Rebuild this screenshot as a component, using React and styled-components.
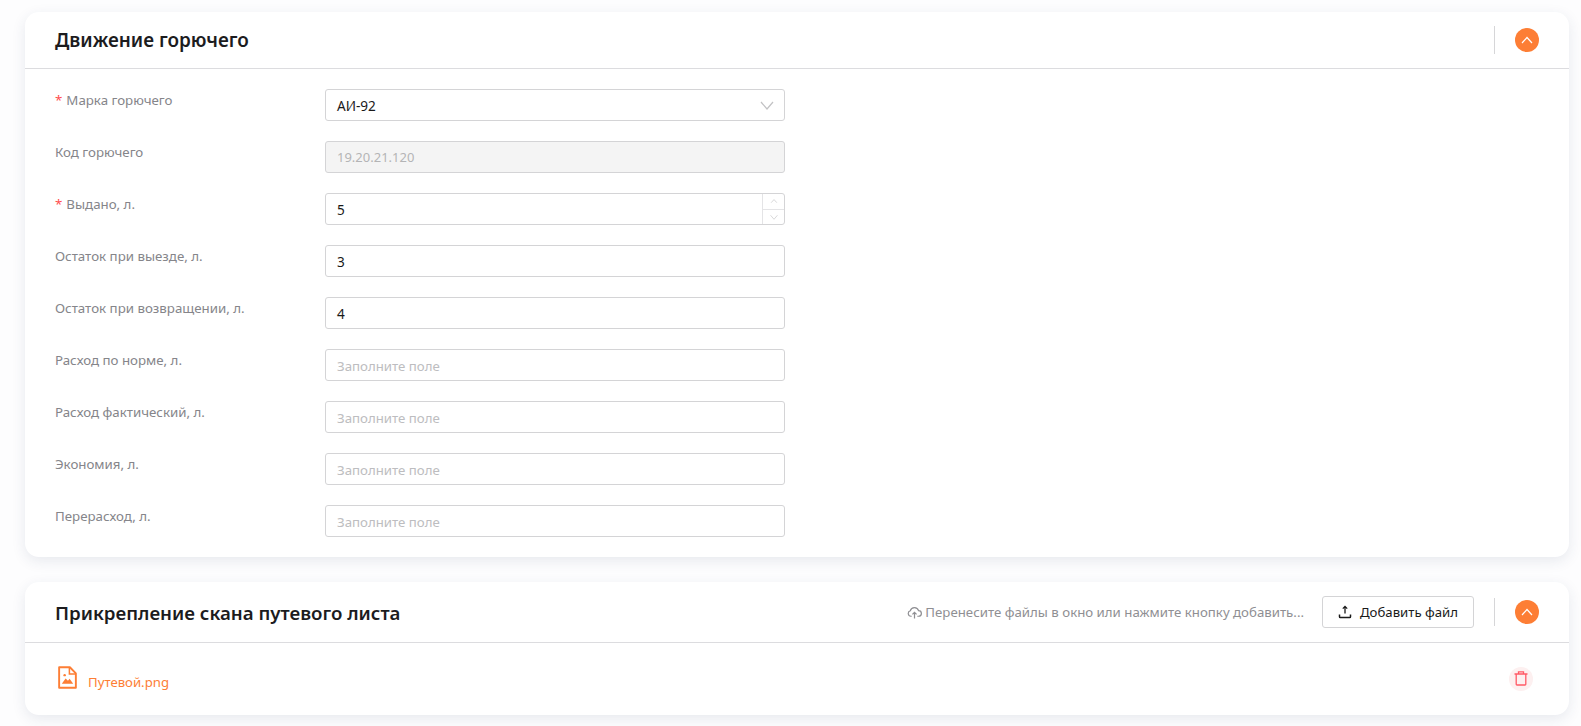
import React from 'react';
import styled, { createGlobalStyle } from 'styled-components';

const GlobalStyle = createGlobalStyle`
  html, body {
    margin: 0;
    padding: 0;
    background: #fdfdfe;
    font-family: "Noto Sans", "Open Sans", sans-serif;
    overflow: hidden;
  }
`;

const Page = styled.div`
  display: flex;
  flex-direction: column;
  gap: 25px;
  padding: 12px 12px 0 25px;
  height: 726px;
  box-sizing: border-box;
`;

const Card = styled.section`
  background: #fff;
  border-radius: 14px;
  box-shadow: 0 4px 14px rgba(40, 60, 100, 0.1);
`;

const CardHeader = styled.header`
  display: flex;
  align-items: center;
  height: ${p => p.$height}px;
  padding: 0 30px;
  border-bottom: 1.5px solid #dcdcdf;
  box-sizing: border-box;
`;

const CardTitle = styled.h2`
  flex: 1;
  margin: 0;
  padding-top: ${p => (p.$lower ? '2px' : '0')};
  font-size: ${p => (p.$lower ? '18.7px' : '18.9px')};
  line-height: 24px;
  font-weight: 600;
  color: #1c1c1e;
`;

const Divider = styled.span`
  width: 1px;
  height: 28px;
  margin: 0 20px;
  background: #d6d6d8;
`;

const CollapseButton = styled.button`
  display: flex;
  align-items: center;
  justify-content: center;
  width: 24px;
  height: 24px;
  padding: 0;
  border: 0;
  border-radius: 50%;
  background: #fd7e35;
  color: #fff;
`;

const FormBody = styled.div`
  display: flex;
  flex-direction: column;
  gap: 20px;
  padding: 20px 30px 20px;
`;

const Row = styled.div`
  display: flex;
  height: 32px;
`;

const Label = styled.label`
  width: 270px;
  font-size: 13.3px;
  line-height: 22px;
  color: #85858a;
`;

const Star = styled.span`
  color: #ff4d4f;
  margin-right: 4px;
`;

const Field = styled.div`
  position: relative;
  display: flex;
  align-items: center;
  width: 460px;
  height: 32px;
  box-sizing: border-box;
  padding: ${p => (p.$placeholder ? '2px' : '0')} 11px 0;
  border: 1px solid #d4d4d6;
  border-radius: 3px;
  font-size: ${p => (p.$placeholder ? '13.25px' : p.$disabled ? '13px' : '13.6px')};
  color: ${p => (p.$placeholder ? '#bdbdc0' : p.$disabled ? '#b4b4b6' : '#1a1a1a')};
  background: ${p => (p.$disabled ? '#f4f4f4' : '#fff')};
`;

const SelectArrow = styled.span`
  position: absolute;
  right: 10px;
  top: 8px;
  color: #c2c2c4;
  display: flex;
`;

const Stepper = styled.div`
  position: absolute;
  top: 0;
  right: 0;
  bottom: 0;
  width: 21px;
  display: flex;
  flex-direction: column;
  border-left: 1px solid #e4e4e6;
`;

const StepButton = styled.span`
  flex: 1;
  display: flex;
  align-items: center;
  justify-content: center;
  color: #c6c6c8;
  & + & {
    border-top: 1px solid #e4e4e6;
  }
`;

const DropHint = styled.span`
  display: flex;
  align-items: center;
  gap: 3px;
  font-size: 13.25px;
  color: #8f8f93;
  margin-right: 18px;
`;

const AddButton = styled.button`
  display: flex;
  align-items: center;
  justify-content: center;
  gap: 8px;
  width: 152px;
  height: 32px;
  padding: 0;
  border: 1px solid #d4d4d6;
  border-radius: 3px;
  background: #fff;
  font: inherit;
  font-size: 13.2px;
  color: #1a1a1a;
`;

const FileRow = styled.div`
  display: flex;
  align-items: center;
  justify-content: space-between;
  padding: 23px 36px 24px 33px;
`;

const FileLink = styled.a`
  display: flex;
  align-items: flex-end;
  gap: 11px;
  font-size: 13.2px;
  line-height: 18px;
  color: #fd7e35;
`;

const FileSvg = styled.svg`
  margin-bottom: 2px;
`;

const DeleteButton = styled.button`
  display: flex;
  align-items: center;
  justify-content: center;
  width: 24px;
  height: 24px;
  padding: 0;
  border: 0;
  border-radius: 50%;
  background: #fdf0f0;
  color: #ff5a66;
`;

const Chevron = ({ up, size = 14, width = 1.2 }) => (
  <svg width={size} height={size} viewBox="0 0 14 14" fill="none" stroke="currentColor" strokeWidth={width}>
    <path d={up ? 'M2 10l5-5.5 5 5.5' : 'M1 4l6 7 6-7'} />
  </svg>
);

const CloudIcon = () => (
  <svg width="15" height="15" viewBox="0 0 16 16" fill="none" stroke="currentColor" strokeWidth="1.3">
    <path d="M5 12H4.2A3 3 0 0 1 3.6 6.1 4.5 4.5 0 0 1 12.3 6a3 3 0 0 1 .1 6H11" />
    <path d="M8 14.5V8M5.8 10L8 7.8 10.2 10" />
  </svg>
);

const UploadIcon = () => (
  <svg width="14" height="14" viewBox="0 0 14 14" fill="none" stroke="currentColor" strokeWidth="1.3">
    <path d="M7 8.5V1.5M4.8 3.6L7 1.4l2.2 2.2" />
    <path d="M1.5 9.5v2.2a.8.8 0 0 0 .8.8h9.4a.8.8 0 0 0 .8-.8V9.5" strokeWidth="1.5" />
  </svg>
);

const FileImageIcon = () => (
  <FileSvg width="19" height="23" viewBox="0 0 20 24" fill="none" stroke="#fd7e35" strokeWidth="2">
    <path d="M1.2 1.2h11.3l6.3 6.5v15.1H1.2z" strokeLinejoin="round" />
    <path d="M12 1.2v7h6.8" strokeWidth="1.6" />
    <circle cx="7" cy="9.5" r="1.3" fill="#fd7e35" stroke="none" />
    <path d="M4 18.5l4-5.5 2.5 2.5 1.7-2.2 3.8 5.2z" fill="#fd7e35" stroke="none" />
  </FileSvg>
);

const TrashIcon = () => (
  <svg width="14" height="15" viewBox="0 0 14 15" fill="none" stroke="currentColor" strokeWidth="1.3">
    <path d="M.5 3h13M4.5 3V.8h5V3M2.2 3v10.2a.8.8 0 0 0 .8.8h8a.8.8 0 0 0 .8-.8V3" />
  </svg>
);

const fields = [
  { label: 'Марка горючего', required: true, value: 'АИ-92', kind: 'select' },
  { label: 'Код горючего', value: '19.20.21.120', kind: 'disabled' },
  { label: 'Выдано, л.', required: true, value: '5', kind: 'number' },
  { label: 'Остаток при выезде, л.', value: '3' },
  { label: 'Остаток при возвращении, л.', value: '4' },
  { label: 'Расход по норме, л.' },
  { label: 'Расход фактический, л.' },
  { label: 'Экономия, л.' },
  { label: 'Перерасход, л.' },
];

export default function App() {
  return (
    <>
      <GlobalStyle />
      <Page>
        <Card>
          <CardHeader $height={57}>
            <CardTitle>Движение горючего</CardTitle>
            <Divider />
            <CollapseButton aria-label="Свернуть">
              <Chevron up />
            </CollapseButton>
          </CardHeader>
          <FormBody>
            {fields.map(f => (
              <Row key={f.label}>
                <Label>
                  {f.required && <Star>*</Star>}
                  {f.label}
                </Label>
                <Field $placeholder={!f.value} $disabled={f.kind === 'disabled'}>
                  {f.value || 'Заполните поле'}
                  {f.kind === 'select' && (
                    <SelectArrow>
                      <Chevron />
                    </SelectArrow>
                  )}
                  {f.kind === 'number' && (
                    <Stepper>
                      <StepButton>
                        <Chevron up size={8} width={1.2} />
                      </StepButton>
                      <StepButton>
                        <Chevron size={8} width={1.2} />
                      </StepButton>
                    </Stepper>
                  )}
                </Field>
              </Row>
            ))}
          </FormBody>
        </Card>
        <Card>
          <CardHeader $height={61}>
            <CardTitle $lower>Прикрепление скана путевого листа</CardTitle>
            <DropHint>
              <CloudIcon />
              Перенесите файлы в окно или нажмите кнопку добавить...
            </DropHint>
            <AddButton>
              <UploadIcon />
              Добавить файл
            </AddButton>
            <Divider />
            <CollapseButton aria-label="Свернуть">
              <Chevron up />
            </CollapseButton>
          </CardHeader>
          <FileRow>
            <FileLink>
              <FileImageIcon />
              Путевой.png
            </FileLink>
            <DeleteButton aria-label="Удалить">
              <TrashIcon />
            </DeleteButton>
          </FileRow>
        </Card>
      </Page>
    </>
  );
}
